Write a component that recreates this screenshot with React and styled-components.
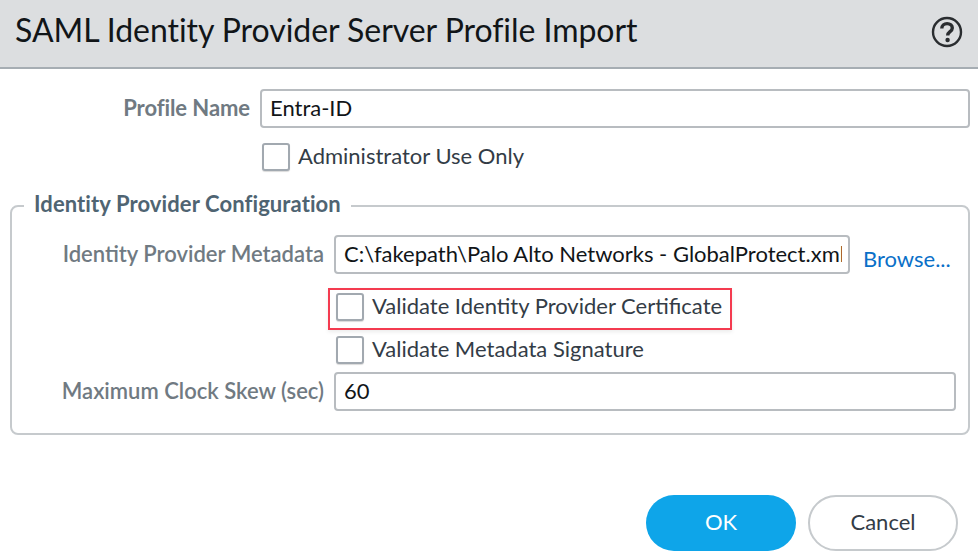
import styled, { createGlobalStyle } from 'styled-components';

const GlobalStyle = createGlobalStyle`
  html, body {
    margin: 0;
    padding: 0;
    background: #fff;
    overflow: hidden;
  }
  body {
    font-family: Lato, "Open Sans", sans-serif;
  }
`;

const Dialog = styled.div`
  width: 978px;
  height: 556px;
  display: flex;
  flex-direction: column;
  font-family: Lato, "Open Sans", sans-serif;
`;

const Header = styled.header`
  height: 67px;
  box-sizing: content-box;
  background: #dcdee0;
  border-bottom: 2px solid #a6adb3;
  display: flex;
  align-items: center;
  justify-content: space-between;
  padding: 0 15px 0 15px;
`;

const Title = styled.h1`
  margin: -9px 0 0;
  font-size: 32px;
  font-weight: 400;
  letter-spacing: -0.05px;
  color: #111518;
`;

const HelpIcon = styled.svg`
  width: 32px;
  height: 32px;
  margin-top: -4px;
`;

const Form = styled.div`
  padding: 20px 8px 0 10px;
  display: flex;
  flex-direction: column;
`;

const Row = styled.div`
  display: flex;
  align-items: center;
  gap: 10px;
  margin-top: ${(p) => p.$top || 0}px;
`;

const Label = styled.label`
  width: ${(p) => p.$width}px;
  flex: none;
  text-align: right;
  font-size: 22px;
  font-weight: ${(p) => (p.$bold ? 700 : 600)};
  letter-spacing: ${(p) => (p.$bold ? '-0.08px' : '0')};
  color: #707a82;
  white-space: nowrap;
  padding-bottom: 2px;
`;

const Field = styled.div`
  box-sizing: border-box;
  width: ${(p) => p.$width}px;
  height: 39px;
  flex: none;
  border: 2px solid #b8bcc0;
  border-radius: 4px;
  padding: 0 6px 3px 8px;
  display: flex;
  align-items: center;
  font-size: 22px;
  color: #111518;
  white-space: nowrap;
`;

const FieldText = styled.span`
  display: block;
  overflow: hidden;
`;

const CheckRow = styled.div`
  display: flex;
  align-items: center;
  gap: 8px;
  font-size: 22px;
  color: #333c46;
  white-space: nowrap;
`;

const CheckText = styled.span`
  line-height: 25px;
  padding-bottom: 3px;
`;

const Box = styled.span`
  box-sizing: border-box;
  width: 28px;
  height: 28px;
  flex: none;
  background: #fff;
  border: 2px solid #a2a9b0;
  border-radius: 3px;
  box-shadow: 0 1px 1px rgba(0, 0, 0, 0.15);
`;

const AdminRow = styled.div`
  margin: 15px 0 0 252px;
`;

const Group = styled.fieldset`
  margin: 19px 0 0;
  padding: 13px 12px 22px 0;
  min-width: 0;
  width: 960px;
  box-sizing: border-box;
  border: 2px solid #c6cacd;
  border-radius: 8px;
`;

const Legend = styled.legend`
  margin-left: 12px;
  padding: 0 10px 5px;
  font-size: 22px;
  font-weight: 700;
  letter-spacing: 0.1px;
  color: #4f6472;
`;

const Browse = styled.a`
  font-size: 22px;
  color: #0a70c8;
  margin: 7px 0 0 3px;
`;

const Highlight = styled.div`
  box-sizing: border-box;
  width: 404px;
  height: 42px;
  margin: 14px 0 0 316px;
  padding: 3px 0 0 6px;
  border: 2px solid #f43b50;
  box-shadow: 0 2px 4px rgba(0, 0, 0, 0.08);
`;

const PlainCheck = styled.div`
  margin: 6px 0 0 324px;
`;

const Footer = styled.div`
  display: flex;
  justify-content: flex-end;
  gap: 12px;
  padding: 60px 20px 0 0;
`;

const Pill = styled.button`
  box-sizing: border-box;
  width: 150px;
  height: 56px;
  border-radius: 28px;
  padding: 0 0 4px;
  font-family: inherit;
  font-size: 22px;
  border: ${(p) => (p.$primary ? 'none' : '2px solid #c6cacd')};
  background: ${(p) => (p.$primary ? '#0ea5e9' : '#fff')};
  color: ${(p) => (p.$primary ? '#fff' : '#333c46')};
`;

export default function App() {
  return (
    <>
      <GlobalStyle />
      <Dialog>
        <Header>
          <Title>SAML Identity Provider Server Profile Import</Title>
          <HelpIcon viewBox="0 0 32 32" fill="none">
            <circle cx="16" cy="16" r="14" stroke="#2a2d30" strokeWidth="2.4" />
            <path
              d="M10.8 12.6c0-3.1 2.3-5 5.3-5s5.2 1.8 5.2 4.4c0 3.8-4.6 3.6-4.6 7.4"
              stroke="#2a2d30"
              strokeWidth="3.4"
            />
            <circle cx="16.6" cy="24" r="2.2" fill="#2a2d30" />
          </HelpIcon>
        </Header>
        <Form>
          <Row>
            <Label $width={240} $bold>Profile Name</Label>
            <Field $width={710}>Entra-ID</Field>
          </Row>
          <AdminRow>
            <CheckRow>
              <Box />
              <CheckText>Administrator Use Only</CheckText>
            </CheckRow>
          </AdminRow>
          <Group>
            <Legend>Identity Provider Configuration</Legend>
            <Row>
              <Label $width={312}>Identity Provider Metadata</Label>
              <Field $width={516}>
                <FieldText>C:\fakepath\Palo Alto Networks - GlobalProtect.xml</FieldText>
              </Field>
              <Browse>Browse...</Browse>
            </Row>
            <Highlight>
              <CheckRow>
                <Box />
                <CheckText>Validate Identity Provider Certificate</CheckText>
              </CheckRow>
            </Highlight>
            <PlainCheck>
              <CheckRow>
                <Box />
                <CheckText>Validate Metadata Signature</CheckText>
              </CheckRow>
            </PlainCheck>
            <Row $top={8}>
              <Label $width={312}>Maximum Clock Skew (sec)</Label>
              <Field $width={622}>60</Field>
            </Row>
          </Group>
        </Form>
        <Footer>
          <Pill $primary>OK</Pill>
          <Pill>Cancel</Pill>
        </Footer>
      </Dialog>
    </>
  );
}
